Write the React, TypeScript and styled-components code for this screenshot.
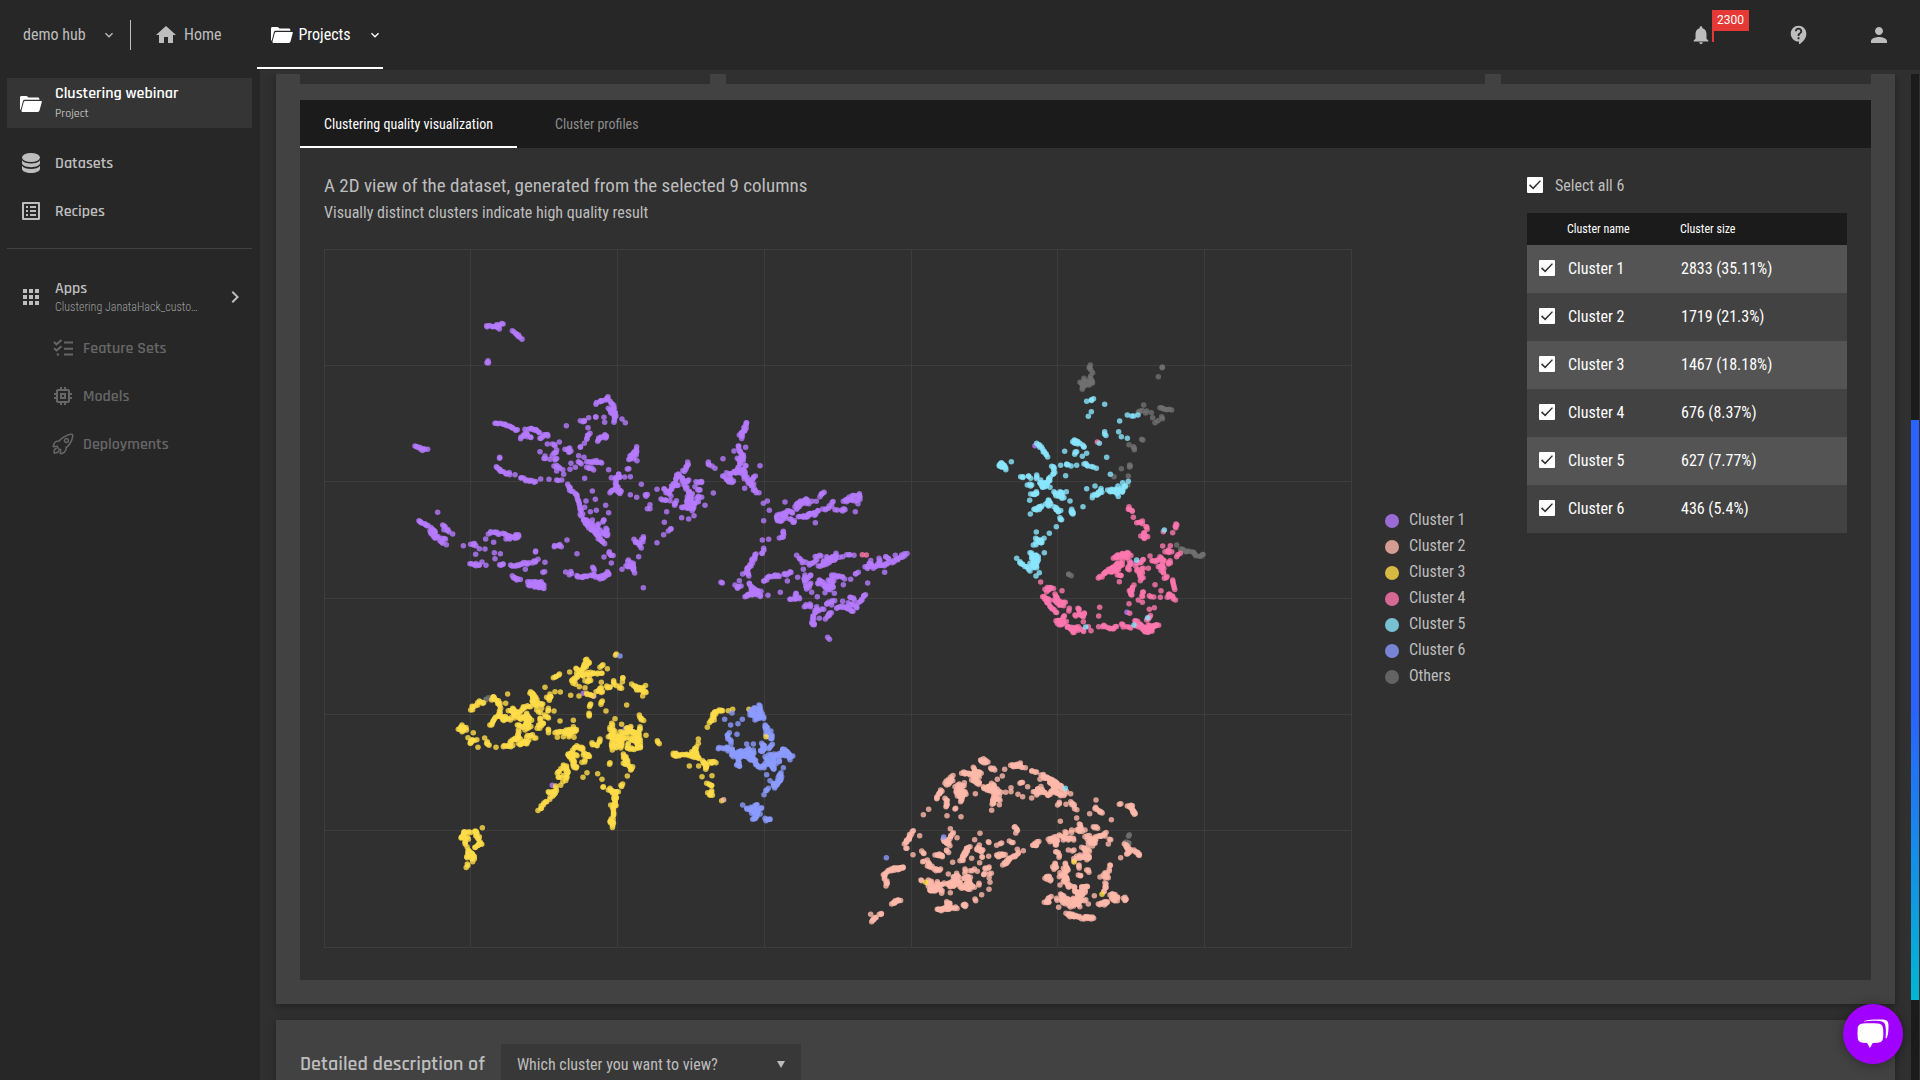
import React, { useMemo, useState } from "react";
import styled, { createGlobalStyle } from "styled-components";
import {
  MdHome,
  MdListAlt,
  MdApps,
  MdMemory,
  MdNotifications,
  MdContactSupport,
  MdPerson,
  MdExpandMore,
  MdChevronRight,
} from "react-icons/md";
import { IoRocketOutline } from "react-icons/io5";

const condensed = `"Roboto Condensed", "Liberation Sans Narrow", Roboto, sans-serif`;
const display = `Rajdhani, Roboto, sans-serif`;

const palette = {
  chrome: "#272727",
  page: "#303030",
  card: "#424242",
  ink: "#1b1b1b",
  text: "#bdbdbd",
  muted: "#666666",
};

const GlobalStyle = createGlobalStyle`
  *, *::before, *::after { box-sizing: border-box; }
  body {
    margin: 0;
    background: ${palette.page};
    color: ${palette.text};
    font-family: ${condensed};
    font-size: 16px;
  }
  button, select, input { font: inherit; color: inherit; }
  h2, p { margin: 0; font-weight: 400; }
`;

const Shell = styled.div`
  height: 100vh;
  display: flex;
  flex-direction: column;
  overflow: hidden;
`;

/* ---------- header ---------- */

const Header = styled.header`
  flex: none;
  height: 70px;
  display: flex;
  align-items: stretch;
  justify-content: space-between;
  background: ${palette.chrome};
`;

const HeaderNav = styled.nav`
  display: flex;
  align-items: center;
  padding-bottom: 1px;
`;

const HubButton = styled.button`
  display: flex;
  align-items: center;
  justify-content: space-between;
  width: 131px;
  height: 30px;
  padding: 0 13px 0 23px;
  border: 0;
  border-right: 1px solid ${palette.text};
  background: none;
`;

const HeaderLink = styled.a<{ $active?: boolean }>`
  display: flex;
  align-items: center;
  gap: 6px;
  height: 69px;
  padding: ${(p) => (p.$active ? "0 0 0 14px" : "0 35px 0 23px")};
  width: ${(p) => (p.$active ? "126px" : "auto")};
  border-top: 2px solid transparent;
  border-bottom: 2px solid ${(p) => (p.$active ? "#ffffff" : "transparent")};
  color: ${(p) => (p.$active ? "#ffffff" : palette.text)};
  text-decoration: none;
  svg:last-child:not(:first-child) {
    margin-left: auto;
  }
`;

const HeaderActions = styled.div`
  display: flex;
  align-items: center;
  gap: 57px;
  padding-right: 29px;
`;

const IconButton = styled.button`
  position: relative;
  display: flex;
  padding: 0;
  border: 0;
  background: none;
  color: ${palette.text};
`;

const BellButton = styled(IconButton)`
  margin-right: 19px;
`;

const Flag = styled.span`
  position: absolute;
  left: 22px;
  top: -14px;
  height: 32px;
  border-left: 2px solid #e53935;
  color: #ffffff;
  font-family: Roboto, sans-serif;
  font-size: 12px;
  line-height: 21px;
`;

const FlagText = styled.span`
  display: block;
  padding: 0 5px 0 3px;
  background: #e53935;
`;

/* ---------- sidebar ---------- */

const Body = styled.div`
  flex: 1;
  min-height: 0;
  display: flex;
`;

const Sidebar = styled.nav`
  flex: none;
  width: 260px;
  padding: 8px 8px 0 7px;
  background: ${palette.chrome};
  font-family: ${display};
  font-weight: 600;
  font-size: 16px;
`;

const ProjectLink = styled.a`
  display: flex;
  align-items: center;
  gap: 13px;
  height: 50px;
  margin-bottom: 11px;
  padding: 1px 0 0 13px;
  background: #353535;
  color: #ffffff;
  text-decoration: none;
`;

const SideLabel = styled.span`
  display: flex;
  flex-direction: column;
  line-height: 20px;
`;

const ProjectKind = styled.small`
  color: ${palette.text};
  font-size: 12px;
  font-weight: 500;
`;

const AppName = styled.small`
  color: #9e9e9e;
  font-family: ${condensed};
  font-size: 12px;
  font-weight: 300;
  line-height: 16px;
  white-space: nowrap;
`;

const SideLink = styled.a<{ $nested?: boolean }>`
  display: flex;
  align-items: center;
  gap: ${(p) => (p.$nested ? "8px" : "12px")};
  height: 48px;
  padding-left: ${(p) => (p.$nested ? "44px" : "12px")};
  color: ${(p) => (p.$nested ? palette.muted : palette.text)};
  text-decoration: none;
`;

const SideRule = styled.hr`
  margin: 13px 0 22px;
  border: 0;
  border-top: 1px solid #424242;
`;

const AppsButton = styled.button`
  display: flex;
  align-items: center;
  gap: 12px;
  width: 100%;
  height: 51px;
  margin-bottom: 2px;
  padding: 0 5px 0 12px;
  border: 0;
  background: none;
  text-align: left;
  > svg:last-child {
    margin-left: auto;
  }
`;

/* ---------- content ---------- */

const Main = styled.main`
  flex: 1;
  min-width: 0;
  display: flex;
  flex-direction: column;
  gap: 16px;
  margin-top: 4px;
  padding: 0 16px;
  overflow: hidden;
`;

const ScrollTrack = styled.div`
  flex: none;
  display: flex;
  width: 9px;
  margin-top: 4px;
  padding: 346px 1px 80px 0;
  background: linear-gradient(to right, ${palette.ink} 8px, ${palette.page} 8px);
`;

const ScrollThumb = styled.div`
  flex: 1;
  background: linear-gradient(#2962ff 0%, #2962ff 50%, #00b8d4 100%);
`;

const Card = styled.section`
  flex: none;
  padding: 0 24px 24px;
  background: ${palette.card};
  box-shadow: 0 2px 8px rgba(0, 0, 0, 0.35);
`;

const TileRow = styled.div`
  display: grid;
  grid-template-columns: 410fr 759fr 370fr;
  gap: 16px;
  height: 10px;
  margin-bottom: 16px;
`;

const Tile = styled.div`
  background: ${palette.page};
`;

const Panel = styled.div`
  background: ${palette.page};
`;

const Tabs = styled.div`
  display: flex;
  height: 48px;
  background: ${palette.ink};
`;

const Tab = styled.button<{ $active?: boolean }>`
  padding: 0 24px;
  margin-right: 14px;
  border: 0;
  border-top: 2px solid transparent;
  border-bottom: 2px solid ${(p) => (p.$active ? "#ffffff" : "transparent")};
  background: none;
  color: ${(p) => (p.$active ? "#ffffff" : "#8d8d8d")};
  font-size: 14px;
`;

const PanelBody = styled.div`
  display: flex;
  align-items: flex-start;
  padding: 24px 24px 32px;
`;

const ChartColumn = styled.div`
  flex: 1;
  min-width: 0;
`;

const ChartTitle = styled.h2`
  font-size: 19px;
  line-height: 27px;
`;

const ChartSubtitle = styled.p`
  font-size: 16px;
  line-height: 28px;
`;

const ChartRow = styled.div`
  display: flex;
  align-items: center;
  margin-top: 22px;
`;

const Plot = styled.svg`
  flex: 1;
  min-width: 0;
  aspect-ratio: 1028 / 699;
`;

const Legend = styled.ul`
  flex: none;
  width: 175px;
  margin: 0;
  padding: 0 0 2px 33px;
  list-style: none;
`;

const LegendItem = styled.li<{ $color: string }>`
  display: flex;
  align-items: center;
  gap: 10px;
  line-height: 26px;
  &::before {
    content: "";
    width: 14px;
    height: 14px;
    margin-top: 2px;
    border-radius: 50%;
    background: ${(p) => p.$color};
    opacity: 0.8;
  }
`;

const Picker = styled.div`
  flex: none;
  width: 320px;
`;

const SelectAll = styled.label`
  display: flex;
  align-items: center;
  gap: 12px;
  height: 26px;
  margin-bottom: 15px;
`;

const Check = styled.input.attrs({ type: "checkbox" })`
  flex: none;
  appearance: none;
  display: grid;
  place-items: center;
  width: 16px;
  height: 16px;
  margin: 0;
  border-radius: 1px;
  background: #ffffff;
  &:checked::after {
    content: "";
    width: 12px;
    height: 10px;
    background: ${palette.page};
    clip-path: polygon(0 54%, 9% 43%, 34% 72%, 91% 2%, 100% 11%, 35% 95%);
  }
`;

const ClusterTable = styled.table`
  width: 100%;
  border-collapse: collapse;
  table-layout: fixed;
  color: #ffffff;
  th {
    height: 32px;
    padding: 0;
    background: ${palette.ink};
    font-size: 12px;
    font-weight: 400;
    text-align: left;
  }
  td {
    height: 48px;
    padding: 0 0 2px 1px;
  }
  tbody tr:nth-child(odd) {
    background: #545454;
  }
  tbody tr:nth-child(even) {
    background: ${palette.card};
  }
`;

const CheckColumn = styled.col`
  width: 40px;
`;

const NameColumn = styled.col`
  width: 113px;
`;

const CheckCell = styled.td`
  && {
    padding-left: 12px;
  }
`;

const DetailCard = styled(Card)`
  display: flex;
  align-items: center;
  gap: 16px;
  padding: 24px;
`;

const DetailTitle = styled.label`
  font-family: ${display};
  font-size: 20px;
  font-weight: 600;
`;

const SelectBox = styled.div`
  display: flex;
  align-items: center;
  width: 300px;
  height: 40px;
  padding-right: 16px;
  background: #383838;
`;

const ClusterSelect = styled.select`
  flex: 1;
  height: 100%;
  padding: 0 0 0 16px;
  border: 0;
  appearance: none;
  background: transparent;
`;

const ChatButton = styled.button`
  position: fixed;
  right: 17px;
  bottom: 16px;
  display: grid;
  place-items: center;
  width: 60px;
  height: 60px;
  padding: 0;
  border: 0;
  border-radius: 50%;
  background: #a000ff;
  box-shadow: 0 1px 12px rgba(0, 0, 0, 0.35);
`;

/* ---------- icons ---------- */

const FolderIcon = () => (
  <svg width="22" height="18" viewBox="0 0 22 18" fill="currentColor" aria-hidden="true">
    <path d="M0 14V2.600C0 1.700.6 1 1.500 1h4.700c.6 0 .9.2 1.300.6L8.500 2.500h9.200c1 0 1.700.7 1.700 1.600v.6H4.800c-1 0-1.700.5-1.900 1.500L.6 15z" />
    <path d="M5.400 6H21c.7 0 1 .4.8 1l-2.300 8.600c-.2.800-.8 1.400-1.700 1.400H2.700c-.9 0-1.400-.6-1.200-1.500L3.700 7.200C3.900 6.400 4.500 6 5.400 6z" />
  </svg>
);

const DatabaseIcon = () => (
  <svg width="24" height="24" viewBox="0 0 24 24" fill="currentColor" aria-hidden="true">
    <ellipse cx="12" cy="6.500" rx="9" ry="4.500" />
    <path d="M3 9.200V12c0 2.300 4 4.200 9 4.200s9-1.900 9-4.200V9.200c-1.500 2.200-5 3.200-9 3.200s-7.500-1-9-3.200z" />
    <path d="M3 14.800v2.900C3 20.100 7 22 12 22s9-1.900 9-4.300v-2.900c-1.500 2.200-5 3.200-9 3.200s-7.500-1-9-3.200z" />
  </svg>
);

const ChecklistIcon = () => (
  <svg width="24" height="24" viewBox="-2 -2 24 24" fill="none" stroke="currentColor" strokeWidth="2" aria-hidden="true">
    <path d="M1 4l2.500 2.300L8.500 2M1 10.200l2.500 2.300L8.500 8.200M11 4.500H20M11 10.700H20M11 16.500H20" />
    <path d="M3.700 16.500h2.400" />
  </svg>
);

const CaretIcon = () => (
  <svg width="8" height="7" viewBox="0 0 8 7" fill="currentColor" aria-hidden="true">
    <path d="M0 0h8L4 7z" />
  </svg>
);

const ChatIcon = () => (
  <svg width="34" height="32" viewBox="0 0 34 32" fill="#ffffff" aria-hidden="true">
    <path d="M7 5.500c-3.600.3-5 1.800-5.300 5.200-.3 3-.3 6 0 8.900.3 3.400 1.700 4.900 5.200 5.200l4.200.3 2.800 5 2.800-5 5.100-.3c3.600-.3 5-1.800 5.300-5.200.3-3 .3-5.900 0-8.900-.3-3.400-1.700-4.900-5.200-5.200-5-.4-10.100-.4-14.900 0z" />
    <path d="M8 2.900c6-1.500 12.500-1.600 18.500-1.300 4.600.3 6 1.800 6 6.200 0 4-.2 8.500-1.700 12.200l-1.300.3c.5-4.300.5-8.300 0-12-.5-3.700-2.100-4.900-6-5.300-5.500-.5-10.500-.4-15.500.4z" />
  </svg>
);

/* ---------- chart data ---------- */

const colors = {
  c1: "#b57bff",
  c2: "#ffb9aa",
  c3: "#ffdc48",
  c4: "#ff77af",
  c5: "#8ae6ff",
  c6: "#8b9bff",
  others: "#707070",
};

const legend: [string, string][] = [
  ["Cluster 1", colors.c1],
  ["Cluster 2", colors.c2],
  ["Cluster 3", colors.c3],
  ["Cluster 4", colors.c4],
  ["Cluster 5", colors.c5],
  ["Cluster 6", colors.c6],
  ["Others", colors.others],
];

/*
 * Each region holds observations in thirds of a plot unit, from its own origin.
 * "x,y" is one observation; "x,y-x,y" is a dense chain of them.
 */
type Region = { x: number; y: number; series: [string, string][] };

const regions: Region[] = [
  {
    x: 76,
    y: 51,
    series: [
      [
        colors.c1,
        `260,77-275,79-290,78-308,72 290,74-295,86 337,92-350,103-363,117 264,182-264,190
        45,438-62,448-75,449 83,448 285,370-315,373-330,382-355,390 588,313-605,302-622,292-632,310-645,325-645,365
        625,325-645,345 666,357 676,368 499,377 541,362-555,362 566,353 587,351-585,352 612,352 614,367 564,383
        375,388 382,410 362,416-375,400-392,410 385,388-403,388-418,398 432,404-445,408 420,415-430,412 442,432
        457,432-468,436 478,426 470,450-455,466 435,468-435,478 420,455 450,478 465,480-473,479 462,498-478,500-485,510
        491,523 470,513 495,448-512,446-508,458 570,400-560,418 553,430 541,442-538,443 593,424-603,414-615,402-618,415
        536,467 552,472 513,490 535,485-543,490 526,502 510,508 560,485-575,484-600,485 605,489 560,502-578,508 626,509
        299,472-298,473 289,500-300,514-315,519-330,521 345,524 363,534-380,541-405,547 422,537 447,538 470,540-482,540
        554,535 577,573 503,553-512,570-525,580-532,600-540,630-550,660-565,680-590,700-600,720-615,732 558,603 586,598
        554,622 571,635 589,631 617,616 626,638 560,660-580,680 577,660 612,660-605,668 618,685-622,695-620,708
        595,672-590,690 600,690-615,705 575,690-600,712 710,440-705,455-690,470-688,480 710,455-700,475 711,482
        682,507-686,509 656,522-660,530-648,535-650,560 634,533 674,531 691,530 630,578-645,570-660,578 650,560-660,575
        724,553 691,584 710,592 736,584-741,590 750,614 750,626 742,626 771,568 863,486-860,500-850,515
        830,525-825,545-810,570-800,580 835,522-848,535-848,545 792,566-805,575-810,585 783,597-798,600 810,602
        824,616-832,604 834,556-826,560 853,550-865,540 866,540 852,555-860,570-875,585-870,600-875,620-860,625
        888,545-900,545-907,550 885,560 900,570-890,570 905,592-890,592 895,605-880,615-875,630 915,616 845,622-855,622
        845,653 866,657 882,647 868,575-875,600 862,590-862,620 940,579 800,635 793,667 813,686-806,690 791,704 771,728
        702,718-715,730-722,742 730,710-727,725 716,770 685,780-690,795-702,805 678,797-690,800 666,808 700,790-702,817
        730,863 628,755-632,765-640,770 612,771 634,789 622,815-628,820-600,832-580,825-565,830-545,833-530,825 497,816
        508,824-515,815 578,802-585,812 600,837-615,828 501,720 463,740-480,732 484,740 531,761 113,637
        57,662-75,672-95,685-105,700-115,715-125,728 90,692-105,715 128,675-135,688-150,696 158,702 125,715-137,715
        139,734 190,737 272,695-290,700-310,704-330,708-355,707 265,702 257,717 318,717-330,716 345,715-358,712 281,727
        212,733-222,728-225,740 238,746 255,747 227,763 283,758 301,761 285,776 210,791-225,794-240,795 246,786 258,796
        299,794-312,795 332,795-350,796-370,790-390,789-410,782 376,808 407,753-407,758 414,778 435,787 434,815-432,819
        337,827-348,835-360,840 383,845-400,855-415,850-435,855 385,855-400,858-430,863 400,845-425,845
        1040,368-1035,385-1030,400-1022,412 1018,405-1035,385 1015,438-1020,455-1025,475-1018,490-1015,510-1005,515
        1037,442 1002,453 1030,465-1032,480 1012,475-1022,480 1038,497-1020,520-995,518-980,520 968,528-985,540-995,547
        990,535-998,540 1035,515-1030,535 1035,530-1050,545-1060,565-1068,580 1066,528-1055,540 1045,550-1060,550
        1034,565 1077,578 1080,497 969,476 925,486-930,492 936,498 945,505 1090,610 1102,603 1108,631 1091,662 1155,606
        1130,650-1132,665-1145,660 1132,645-1150,645-1165,630-1180,640 1150,640-1160,655
        1185,620-1200,605-1215,598-1232,600 1190,628-1205,610-1225,610 1249,604 1260,590-1268,577-1275,578
        1170,658-1182,660-1182,668 1195,650-1210,652-1230,640-1245,640-1255,630 1210,650-1240,643 1246,668
        1268,627-1280,625-1290,620-1296,605 1305,629-1312,629 1325,630-1338,630 1330,604-1345,595-1360,590-1380,583-1383,598
        1340,605-1350,600-1370,600 1374,611 1366,635 1150,694-1153,705-1148,712 1138,714 1087,720 1106,718
        1091,745-1088,762 1068,762-1060,780-1050,795-1040,805-1048,830 1042,805-1038,815 1028,822 1018,842 967,849-965,849
        1005,855-1015,865-1022,858 1048,850-1060,870-1070,870-1082,888 1035,890-1050,880-1065,878 1055,870-1080,875
        1048,882-1075,885 1104,886 1091,843-1105,832-1120,828-1138,826 1152,823-1160,822-1172,815 1162,843 1141,877
        1190,766 1198,775-1205,785-1215,785 1210,808 1228,795-1240,785-1250,780 1263,768-1248,768
        1255,798-1270,795-1285,785-1300,770-1310,765 1270,785-1295,780-1315,770 1280,770-1305,775 1308,760 1328,770
        1340,764-1348,764 1362,766 1375,817-1365,822 1352,838 1395,800-1410,800-1415,785 1408,790-1405,805
        1420,805-1430,795-1450,795-1475,785-1500,772-1520,760 1437,775-1440,785 1457,770-1465,780 1486,766 1454,817
        1193,832 1215,825-1215,845-1220,865 1232,825-1222,835 1232,850-1225,860 1258,840-1256,855 1265,845-1275,860-1290,870
        1285,840-1300,850-1285,865 1295,825-1300,840 1300,828-1318,830-1332,834 1275,855-1300,860 1330,854 1303,880
        1275,878 1235,877 1252,890 1403,849 1170,898-1185,895-1200,895 1188,880-1185,890 1213,920-1218,912
        1230,912-1230,921 1250,920-1245,935-1240,955-1240,972 1250,930-1268,930 1235,968-1245,975 1258,955
        1282,950-1295,938 1276,957 1280,912-1295,900 1304,902 1295,915 1310,925-1330,920-1345,925-1360,935 1328,904
        1350,892-1362,897 1345,908-1365,918-1370,925 1375,908-1385,895-1398,885 1283,1012-1286,1018`,
      ],
      [colors.c4, `1387,764 1399,765`],
    ],
  },
  {
    x: 656,
    y: 101,
    series: [
      [
        colors.others,
        `331,45-331,60 338,68 332,78 312,85-315,95-335,98 300,97-310,105-335,100 307,118-312,110 330,85-335,100
        547,51-546,53 535,80 491,165 475,187-483,185 500,183-498,190 514,188 518,203 525,218 534,212 545,200-546,203
        540,173-550,178-572,180 485,268-486,269 447,284 460,290-463,298 449,345-447,353 424,356 402,380 445,378 443,405
        590,585 602,597-620,603-640,610-655,616-672,615 266,673-273,679`,
      ],
      [colors.c1, `165,287 441,787 454,638`],
      [
        colors.c4,
        `447,470-450,480-458,482 460,502 470,518-485,515-488,520 498,530-500,538 492,548-485,558-492,565 503,560
        493,550-495,560 588,522-588,535 578,548 550,545 548,588 571,587 555,605-575,605 565,600 590,620-598,613
        355,684-370,675-385,660-400,650-415,640-430,635 375,670-395,665-410,655-425,645 400,625-415,615-430,608-448,610
        408,622-425,622 435,620-450,620 448,632-448,645 445,650-445,660 418,650-410,662 412,675-425,678 418,695
        467,648-470,660 470,640-482,640 488,630-490,628 510,618 516,632 520,632-537,632 540,620-550,635-545,655-548,668
        540,650-550,655 535,650 570,632-568,645 490,655-485,670-480,690 478,670-487,680 505,655 462,705-455,720-452,738
        448,722-460,725 525,704 543,722 541,742 490,726-486,738 508,737-518,739 475,750 487,757 447,761 449,790 508,778
        523,773 553,685-562,680 578,690-580,705-582,715 568,732-575,738-585,748 562,742-568,735 182,696
        195,718-205,712-218,715 200,725-210,715 188,740-200,745-205,760-215,775-228,790 195,748-205,750 246,722
        225,732-230,745-240,755-253,760 222,750-235,765 240,765-248,765 268,775-265,780 294,775-295,783
        285,795-300,795-315,792 310,800-300,793 228,812-240,815-250,800 253,797 232,820-245,822-258,815 310,815
        265,830-275,840-285,850 275,832-295,838-310,845 262,832-280,835 333,842 325,830 295,830 359,772 356,798 356,830
        368,830-375,825 380,832-395,834-408,831 425,822-427,830 440,830-450,832 465,812-480,820-490,840-505,848
        468,828-485,830 480,825-495,835-515,840-530,825 505,825-520,830-535,825 495,845-515,842 500,810-508,800 352,276`,
      ],
      [
        colors.c5,
        `320,154 334,149-342,148 374,163 334,185 325,199 442,195 455,198-460,198 474,195 419,213 416,245 424,260 442,265
        374,245-376,256 358,280 170,280-180,290-190,302-200,318 283,270-295,278-305,285-315,292 278,275-290,285
        290,305-283,310 254,304 307,319 320,310 380,322 58,345-65,340-72,345-75,358 58,348-70,352 94,335
        215,349-222,355-222,370 242,346 260,342-270,350 290,346 312,342-325,345-337,348 349,355 257,377 391,373
        122,380-132,384 152,385-145,380 170,375-168,387 142,405-158,405 182,390-190,408 180,400-195,400-210,385-217,375
        188,412-200,400-210,390 210,412 152,432-168,432 169,425-167,435 149,451 228,437-245,430-250,440 259,425
        240,425-245,445 270,453 222,425-225,435 151,492 162,478-175,475-183,465 170,480-180,475 197,462-210,455-215,465
        205,450-208,468 222,470-230,480-240,478-235,487 240,503-247,512 275,478-275,495 278,485-280,490 309,470 320,416
        345,408 337,443-350,432-362,415 352,435-365,425 383,420-400,420-412,425-425,420-435,405 390,425-408,425-412,437
        395,418-430,425 428,398 445,394 414,408 229,530 208,550 169,546 167,565 192,565 160,585-175,578-185,570
        172,568-185,580 193,608 110,625 120,635-130,645-148,662 150,608-158,620-160,640-165,655 155,615-175,620-175,632
        155,625-170,630-168,650 150,640-162,650 178,668 168,678 553,540 470,630 503,803 462,825 317,831`,
      ],
    ],
  },
  {
    x: 116,
    y: 391,
    series: [
      [colors.others, `138,178-155,172`],
      [colors.c1, `430,160 461,169 556,266 337,436`],
      [
        colors.c3,
        `529,42-530,43 440,58-432,75-425,90-415,105 445,65-430,85 408,85-420,95-430,110 410,100-430,100 405,120-400,130
        395,122-410,110 389,96 340,113-357,104 448,68 480,82-490,75 502,86 452,97-465,100 472,102-485,102
        448,110-440,95 435,122-455,125 484,127 418,140 435,143 407,133 315,142 345,155 361,156 392,166 417,168
        484,143-475,150 468,155-490,155 440,160-455,162 460,168 500,138-512,143 521,122-527,135 548,113-550,122
        540,138-542,148 575,132-590,142-605,145-615,138 590,150-605,150-617,160 608,168 560,195 487,183-481,190
        452,192-449,202 447,220-447,228 498,213 203,162 272,155-280,170-290,180-305,195 270,160-290,175 282,165-278,190
        320,172-335,172 330,162-330,180 160,170-172,185-180,200 180,190 197,190 182,205-175,225-160,240-150,255
        92,210-100,198-115,190-130,187 118,183 155,180-160,172 205,212-220,215-235,215 190,230-205,240-225,230-240,235
        180,225-190,240 218,205-225,225 235,220-250,205 250,200-270,200 278,185-290,200 240,235-260,235-275,240
        260,220-268,240-262,255 290,210-300,215 305,205 325,205-322,215 342,213 315,225-325,235 300,235-305,250-295,262
        310,250-300,262 325,268-322,280 360,243 400,241 232,255-245,260-262,252 235,270-232,290 255,270-270,262
        250,230-265,250 66,255-68,275 55,268-78,268 62,262-75,262 100,278 84,293 95,300-90,312 95,305-108,298 114,322
        134,294 140,310-148,318 142,305 168,322 190,320-205,318-220,318 210,310-225,295 225,295-240,295
        235,310-250,308-265,300 240,314-260,308 260,292-272,285-285,293 345,278-360,278 352,292
        365,275-380,270-400,270-412,270 370,290 388,280-388,292 402,292 375,280-395,278 400,260-400,275 480,297-480,308
        456,308-465,315-473,320 525,236 515,250-517,262 545,253 510,262-520,275-512,290-520,300 505,290-525,285-545,290
        540,275-560,280-580,275 535,300-555,295-580,300 515,310-520,330 525,310-530,325 545,305-542,325 565,310-560,325
        598,225-608,240 600,260-595,280-598,300-598,320 570,270-590,280-590,300 560,265-575,262 570,328-585,325-600,322
        580,290-595,295-590,325 618,286 530,300-545,308-535,315 550,342-555,355-560,370 558,350-562,365 550,370-568,378
        578,380-573,390 562,408 510,368-512,372 548,432-545,440 652,302-660,311 441,398 429,412 473,401 486,418
        490,440-492,445 505,450-515,450 510,445-515,460 528,455-530,470-522,490-520,520-515,545-518,560 525,465-525,500
        512,495-522,500 510,545-522,548 535,455-520,455 398,330-410,320-420,325 385,345-400,340-410,345
        390,345-395,360-405,380 390,350-385,340 425,322-435,340-447,348 430,345-445,350 435,360-428,368 400,345-398,370
        370,375-380,380-385,400 355,395-365,388-375,380 352,400 380,385-380,410-372,425 355,412-370,410 410,380-400,382
        362,436 347,438-348,450-340,462-330,475 325,455-338,458 320,485-312,492 310,495-297,512 775,297 775,310
        770,320-762,335-750,348 700,340-712,345-730,343 700,345-710,350 740,343-755,350-775,350 765,325-772,345-778,355
        755,335-770,335 748,378 776,378 788,362-795,375-800,388 792,370-800,380 808,365-820,362-815,372 828,368 786,410
        816,407 800,430-810,432-818,434 815,452-812,460 803,458-815,468 845,482 848,212-830,212-822,225-820,240-812,245
        825,215-820,230 865,212 878,208 808,248 802,262 927,208 127,563 105,573-108,580 72,575-66,592 72,578-90,578
        65,592-85,595 105,575-110,590-122,610 118,590 76,605-80,618 105,622-122,615 85,630-85,650 80,650-100,640
        95,640-105,655 98,665 82,672-82,682 90,635-95,660`,
      ],
      [
        colors.c6,
        `540,48 876,219 854,238 907,238 894,251 872,255 891,283 868,278-862,292-872,302 873,311 957,195-960,210-970,235
        930,215-945,205-958,210 935,215-950,225-960,235 930,225-955,230 945,240-955,225 975,255-980,280-995,290
        975,262-985,260 985,275-990,270 985,290-998,298 835,326-850,326-865,330 860,322-880,325-878,340
        875,345-890,340-905,335 880,350-900,350-920,345 885,340-895,350 900,335-915,330-930,340-945,365-955,380
        905,340-925,355-945,365 895,360-900,378 925,325-925,345 940,330-938,350 890,375-900,378 920,312 940,312
        965,310-975,330-960,330 970,315-968,335 997,313-985,325 975,350-985,365-1000,360 985,345-1005,345-1020,340-1030,330
        1000,350-998,385-1005,370 990,370-1000,390 1020,345-1040,345-1060,350 1040,335-1048,358 1028,328-1045,340
        955,380-975,380 975,370-985,375 1018,365-1010,350 1030,383 980,404 1023,398-1018,415-1010,435 1025,410-1005,440
        990,422 1000,430-1005,445 985,445-980,455 972,464 908,495 920,505-935,505-950,495 930,510-945,515-960,505
        945,505-950,525-942,535 935,520-960,520 965,503 975,535-992,537 938,538-950,530 978,542`,
      ],
      [colors.c3, `978,290`],
      [colors.c2, `851,479`],
    ],
  },
  {
    x: 526,
    y: 491,
    series: [
      [colors.others, `838,284-839,286 825,308-838,308`],
      [
        colors.c2,
        `392,60-402,58-412,66 395,65-405,70 422,84-433,90 464,88 457,108 482,76-495,73-512,70 490,80-515,80 526,83
        545,93-560,98 570,118 573,105-590,113-605,120-620,130-640,150 580,110-600,120-625,140 600,125-612,145-630,160
        610,150-635,165-645,165 620,130-635,145 650,155 662,161 555,155-565,145-570,140 560,165-575,150
        578,155-590,162-598,165 550,155 600,158-610,150 545,174 533,140 510,130-518,130 504,163 518,170 483,143 483,155
        467,157 442,118 370,82-375,95 335,100-348,98 345,102-370,98 360,105-378,115-385,130 370,100-390,100
        365,120-390,125 375,105-380,130 385,95-388,115 400,140-415,150-430,150 405,145-425,130-440,145 430,160-450,155
        415,140-445,165 420,150-440,155 285,130-298,120-308,110 290,135-305,122 272,150-265,165-262,178 270,158-275,153
        315,140-325,135-340,140 320,150-335,150-325,165 318,155-330,170-335,180 345,155-348,165-335,175 325,145-335,165
        376,161 343,128 332,185 285,175-292,188-288,203 317,205-318,210 291,227 333,230 236,208 220,224 432,170-430,190
        440,178-448,182 448,194 425,211 430,190-435,178 628,187-626,197 648,193 662,185-670,195-678,208 680,234 631,244
        738,180 737,202-745,210-755,220 735,206 719,221 808,193-810,194 832,198-845,195 840,200-850,210-855,222
        845,205-850,218 784,239 190,272-180,285-172,300-165,315 180,290-170,305 168,325-173,328 189,344 209,287 301,266
        310,278-303,290 321,293 280,298-290,305-300,298 290,308-298,315 285,305-295,310 390,280 374,299 415,305-416,306
        495,260-500,280 493,262 215,333-220,340 218,365-230,362-240,375 232,378-245,382-255,385 258,392-272,390
        255,345-270,342-278,348 262,345-275,348 290,330-295,338 360,320-345,335-335,355 350,325-355,335-340,350
        330,362-338,360 365,355 388,315-385,330-395,330 380,328-397,335 396,350-395,355 389,368 416,349 308,367 440,316
        455,309-452,312 478,303-488,310 502,328-503,340 520,332 440,345-460,342 445,350-463,345
        458,375-470,365-485,355-495,345 465,370-480,358 548,316-560,315-565,303 555,310-560,318 62,523 68,540-78,530
        65,545-72,535 88,523-96,517 125,492-135,485-150,480 130,488-148,480 108,438-108,420-103,405
        105,405-115,395-130,385-145,388 130,388-160,383 148,388-162,380 213,420-218,425 235,420-240,432-245,425
        235,430-240,448-252,452 250,440-265,445-275,450 262,425-258,445 240,450-265,450 275,460 270,435-285,432-300,432
        295,430-305,425-315,430 300,440-310,435-325,425 320,400-318,420-328,430 310,410-330,412 295,402 301,458
        345,387-345,398 342,415-350,410-360,415 330,440-345,435-355,425-360,430 335,445-345,440-360,450
        350,440-370,440-375,445 355,415-360,440 360,392-370,390 382,394 387,435 387,430 405,385-415,380-418,385
        405,398-400,405 424,400-418,410 420,427 417,448 395,464 375,477-376,480 310,430-308,440
        265,508-280,505-300,505-320,503 290,485-300,492-305,500 262,508-290,510 340,495-348,492-343,500 298,490-290,495
        595,298-610,295-620,288 600,305-615,300-618,312 628,285-640,290 605,300-625,300 620,305-615,318 640,300-655,295
        645,275-650,285 665,270-668,275 655,300-658,290 688,252-690,265-685,275 680,270-695,272 705,270 670,295-672,300
        705,290-715,285 718,305-730,300-735,290 712,298-740,300 745,288-755,285-768,278 735,310-728,315 730,260-743,265
        778,298-779,300 775,312 765,288-750,290 715,310-730,305 655,330 672,330-665,330 617,335-625,340-628,350
        695,322-712,322 705,340-715,345-710,360 700,350-720,352 690,345-680,355-670,362 705,330-718,335 690,355-700,352
        615,370-612,385 608,380-622,380 646,370-650,390-640,400 640,385-655,388 630,398 585,415-595,408-600,415
        590,412-598,420 687,375-690,385 685,405-695,404 710,390-720,397 628,410-645,408-650,420 645,412-655,435
        640,425-648,415 630,435 655,440-670,440-672,450 780,375-778,390 765,398-775,405 760,405-775,415 750,411
        765,428-768,445 762,455-765,445 700,440-715,437 695,440-690,455-685,465 675,455-700,460-705,445
        632,462-640,475-645,490 635,465-655,480 645,485-660,480 635,480-640,490 655,490-660,500 680,455-690,470-695,485
        670,475-690,475 685,480-688,500 675,485-672,500 668,490-690,488 690,465-700,460 695,480-705,478 620,475-620,480
        583,487-598,488 590,485-602,472 626,502 715,492 733,467 745,492-760,492-775,488 755,490-770,485
        780,465-790,460-800,470 785,475-800,470 790,480-802,482 825,472-828,480 820,475-828,476 648,520-660,522-675,528
        655,525-680,530-700,535-725,532 660,530-670,525 705,530-728,535 823,312-830,320-840,325 828,318-835,330
        830,342-840,332 852,330 855,335-870,345 812,353 868,343`,
      ],
      [colors.c5, `646,145`],
      [colors.c3, `227,427 672,366 756,463`],
      [colors.c6, `281,291 109,353`],
    ],
  },
];

type Dot = { x: number; y: number };

const STEP = 5;

function expand(source: string): Dot[] {
  const dots: Dot[] = [];
  let seed = 7;
  const jitter = () => {
    seed = (seed * 16807) % 2147483647;
    return (seed / 2147483647 - 0.5) * 7;
  };
  for (const token of source.trim().split(/\s+/)) {
    const knots = token.split("-").map((pair) => pair.split(",").map(Number));
    dots.push({ x: knots[0][0], y: knots[0][1] });
    for (let i = 1; i < knots.length; i++) {
      const [ax, ay] = knots[i - 1];
      const [bx, by] = knots[i];
      const count = Math.max(1, Math.round(Math.hypot(bx - ax, by - ay) / STEP));
      for (let k = 1; k <= count; k++) {
        const t = k / count;
        dots.push({ x: ax + (bx - ax) * t + jitter(), y: ay + (by - ay) * t + jitter() });
      }
    }
  }
  return dots;
}

const gridX = [0, 146, 293, 440, 587, 733, 880, 1027];
const gridY = [0, 116, 232, 349, 465, 581, 698];

function ScatterPlot() {
  const layers = useMemo(
    () =>
      regions.map((region) => ({
        ...region,
        layers: region.series.map(([color, source]) => ({ color, dots: expand(source) })),
      })),
    []
  );
  return (
    <Plot viewBox="0 0 1028 699" role="img" aria-label="2D view of the clusters">
      <g stroke="#3d3d3d" strokeWidth="1">
        {gridX.map((x) => (
          <path key={x} d={`M${x + 0.5} 0V699`} />
        ))}
        {gridY.map((y) => (
          <path key={y} d={`M0 ${y + 0.5}H1028`} />
        ))}
      </g>
      {layers.map((region) => (
        <g key={region.x} transform={`translate(${region.x} ${region.y}) scale(${1 / 3})`}>
          {region.layers.map((layer, i) => (
            <g key={i} fill={layer.color} fillOpacity="0.8">
              {layer.dots.map((dot, k) => (
                <circle key={k} cx={dot.x.toFixed(1)} cy={dot.y.toFixed(1)} r="8.300" />
              ))}
            </g>
          ))}
        </g>
      ))}
    </Plot>
  );
}

/* ---------- table data ---------- */

const clusters = [
  { name: "Cluster 1", size: "2833 (35.11%)" },
  { name: "Cluster 2", size: "1719 (21.3%)" },
  { name: "Cluster 3", size: "1467 (18.18%)" },
  { name: "Cluster 4", size: "676 (8.37%)" },
  { name: "Cluster 5", size: "627 (7.77%)" },
  { name: "Cluster 6", size: "436 (5.4%)" },
];

export default function App() {
  const [picked, setPicked] = useState<string[]>(clusters.map((c) => c.name));
  const allPicked = picked.length === clusters.length;
  const toggle = (name: string) =>
    setPicked((now) => (now.includes(name) ? now.filter((n) => n !== name) : [...now, name]));

  return (
    <Shell>
      <GlobalStyle />
      <Header>
        <HeaderNav aria-label="Main">
          <HubButton>
            demo hub <MdExpandMore size={16} />
          </HubButton>
          <HeaderLink href="#home">
            <MdHome size={24} /> Home
          </HeaderLink>
          <HeaderLink href="#projects" $active>
            <FolderIcon /> Projects <MdExpandMore size={16} />
          </HeaderLink>
        </HeaderNav>
        <HeaderActions>
          <BellButton aria-label="Notifications">
            <MdNotifications size={22} />
            <Flag>
              <FlagText>2300</FlagText>
            </Flag>
          </BellButton>
          <IconButton aria-label="Support">
            <MdContactSupport size={22} />
          </IconButton>
          <IconButton aria-label="Account">
            <MdPerson size={24} />
          </IconButton>
        </HeaderActions>
      </Header>

      <Body>
        <Sidebar aria-label="Project">
          <ProjectLink href="#project">
            <FolderIcon />
            <SideLabel>
              Clustering webinar
              <ProjectKind>Project</ProjectKind>
            </SideLabel>
          </ProjectLink>
          <SideLink href="#datasets">
            <DatabaseIcon /> Datasets
          </SideLink>
          <SideLink href="#recipes">
            <MdListAlt size={24} /> Recipes
          </SideLink>
          <SideRule />
          <AppsButton>
            <MdApps size={24} />
            <SideLabel>
              Apps
              <AppName>Clustering JanataHack_custo…</AppName>
            </SideLabel>
            <MdChevronRight size={24} />
          </AppsButton>
          <SideLink href="#feature-sets" $nested>
            <ChecklistIcon /> Feature Sets
          </SideLink>
          <SideLink href="#models" $nested>
            <MdMemory size={24} /> Models
          </SideLink>
          <SideLink href="#deployments" $nested>
            <IoRocketOutline size={24} /> Deployments
          </SideLink>
        </Sidebar>

        <Main>
          <Card>
            <TileRow>
              <Tile />
              <Tile />
              <Tile />
            </TileRow>
            <Panel>
              <Tabs role="tablist">
                <Tab role="tab" aria-selected="true" $active>
                  Clustering quality visualization
                </Tab>
                <Tab role="tab" aria-selected="false">
                  Cluster profiles
                </Tab>
              </Tabs>
              <PanelBody>
                <ChartColumn>
                  <ChartTitle>A 2D view of the dataset, generated from the selected 9 columns</ChartTitle>
                  <ChartSubtitle>Visually distinct clusters indicate high quality result</ChartSubtitle>
                  <ChartRow>
                    <ScatterPlot />
                    <Legend>
                      {legend.map(([name, color]) => (
                        <LegendItem key={name} $color={color}>
                          {name}
                        </LegendItem>
                      ))}
                    </Legend>
                  </ChartRow>
                </ChartColumn>
                <Picker>
                  <SelectAll>
                    <Check
                      checked={allPicked}
                      onChange={() => setPicked(allPicked ? [] : clusters.map((c) => c.name))}
                    />
                    Select all 6
                  </SelectAll>
                  <ClusterTable>
                    <colgroup>
                      <CheckColumn />
                      <NameColumn />
                      <col />
                    </colgroup>
                    <thead>
                      <tr>
                        <th />
                        <th scope="col">Cluster name</th>
                        <th scope="col">Cluster size</th>
                      </tr>
                    </thead>
                    <tbody>
                      {clusters.map((c) => (
                        <tr key={c.name}>
                          <CheckCell>
                            <Check
                              id={c.name}
                              aria-label={c.name}
                              checked={picked.includes(c.name)}
                              onChange={() => toggle(c.name)}
                            />
                          </CheckCell>
                          <td>{c.name}</td>
                          <td>{c.size}</td>
                        </tr>
                      ))}
                    </tbody>
                  </ClusterTable>
                </Picker>
              </PanelBody>
            </Panel>
          </Card>

          <DetailCard>
            <DetailTitle htmlFor="cluster-select">Detailed description of</DetailTitle>
            <SelectBox>
              <ClusterSelect id="cluster-select" defaultValue="">
                <option value="">Which cluster you want to view?</option>
                {clusters.map((c) => (
                  <option key={c.name}>{c.name}</option>
                ))}
              </ClusterSelect>
              <CaretIcon />
            </SelectBox>
          </DetailCard>
        </Main>
        <ScrollTrack>
          <ScrollThumb />
        </ScrollTrack>
      </Body>

      <ChatButton aria-label="Open chat">
        <ChatIcon />
      </ChatButton>
    </Shell>
  );
}
